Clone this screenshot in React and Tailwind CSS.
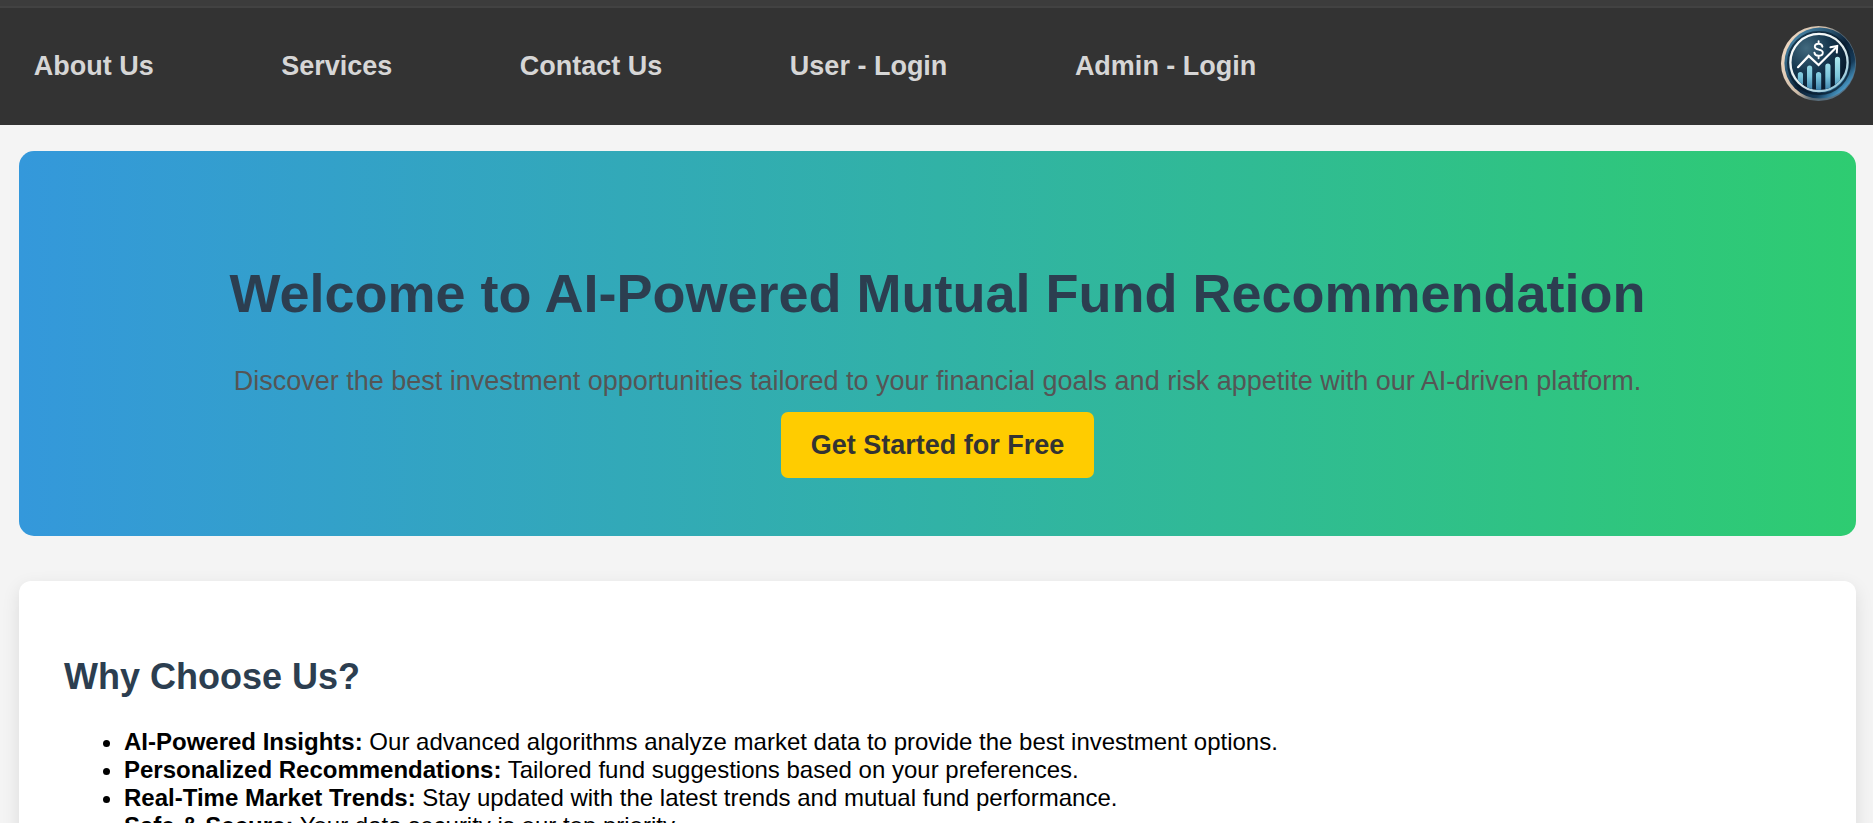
import React from 'react';

const links = ['About Us', 'Services', 'Contact Us', 'User - Login', 'Admin - Login'];

const reasons = [
  ['AI-Powered Insights:', 'Our advanced algorithms analyze market data to provide the best investment options.'],
  ['Personalized Recommendations:', 'Tailored fund suggestions based on your preferences.'],
  ['Real-Time Market Trends:', 'Stay updated with the latest trends and mutual fund performance.'],
  ['Safe & Secure:', 'Your data security is our top priority.'],
];

function Logo() {
  return (
    <svg viewBox="0 0 75 75" className="h-[75px] w-[75px] shrink-0" aria-hidden="true">
      <defs>
        <linearGradient id="rim" x1="0.05" y1="0.3" x2="0.95" y2="0.7">
          <stop offset="0" stopColor="#ecd6c0" />
          <stop offset="0.4" stopColor="#cdbba8" />
          <stop offset="0.6" stopColor="#5b6a74" />
          <stop offset="1" stopColor="#54758c" />
        </linearGradient>
        <linearGradient id="band" x1="0.15" y1="0.1" x2="0.88" y2="0.85">
          <stop offset="0" stopColor="#4682a4" />
          <stop offset="0.3" stopColor="#27526f" />
          <stop offset="0.55" stopColor="#0b2036" />
          <stop offset="0.8" stopColor="#163c5a" />
          <stop offset="1" stopColor="#4ea3d2" />
        </linearGradient>
        <radialGradient id="face" cx="0.28" cy="0.25" r="0.8">
          <stop offset="0" stopColor="#41697e" />
          <stop offset="0.5" stopColor="#173850" />
          <stop offset="1" stopColor="#07182b" />
        </radialGradient>
        <linearGradient id="ring" x1="0" y1="0" x2="0.8" y2="1">
          <stop offset="0" stopColor="#ffffff" />
          <stop offset="0.6" stopColor="#e4edee" />
          <stop offset="1" stopColor="#8cc3d8" />
        </linearGradient>
        <linearGradient id="bars" gradientUnits="userSpaceOnUse" x1="0" y1="31" x2="0" y2="66">
          <stop offset="0" stopColor="#aee8ee" />
          <stop offset="0.55" stopColor="#7cc6dc" />
          <stop offset="1" stopColor="#3478a6" />
        </linearGradient>
        <clipPath id="inside">
          <circle cx="38" cy="36.5" r="27.6" />
        </clipPath>
      </defs>
      <circle cx="37.5" cy="37.5" r="37.5" fill="url(#rim)" />
      <circle cx="38.9" cy="37.1" r="35.5" fill="url(#band)" />
      <circle cx="38" cy="37" r="31" fill="none" stroke="#07192b" strokeWidth="2" opacity="0.7" />
      <circle cx="38" cy="36.5" r="28.6" fill="url(#face)" stroke="url(#ring)" strokeWidth="2.3" />
      <g clipPath="url(#inside)" stroke="url(#bars)" strokeWidth="5.2" strokeLinecap="round">
        <path d="M19.4 70V48.5M28.6 70V42.2M37.6 70.1V48.5M46.9 70V40.2M56.5 70V33.4" />
      </g>
      <path d="M17 41.2 27.7 29.9 37.6 39 54.8 21.8" fill="none" stroke="#fff" strokeWidth="2.2" strokeLinecap="round" strokeLinejoin="miter" />
      <path d="M49.4 21.2 56.2 19.9 55.8 26.6" fill="none" stroke="#fff" strokeWidth="2" strokeLinecap="round" />
      <path d="M41.4 20.7C41 18.6 39.6 17.8 37.6 17.8 35.2 17.8 33.8 19 33.8 20.8 33.8 25 41.8 22.2 41.8 26.7 41.8 28.7 40 29.8 37.6 29.8 35.2 29.8 33.7 28.7 33.4 26.7M37.6 15.2V17.8M37.6 29.8V32.2" fill="none" stroke="#fff" strokeWidth="1.9" strokeLinecap="round" />
    </svg>
  );
}

export default function App() {
  return (
    <div className="h-[823px] overflow-hidden bg-[#f4f4f4] font-['Liberation_Sans',Arial,sans-serif] text-black">
      <header className="flex h-[125px] flex-col bg-[#333333]">
        <div className="h-[8px] shrink-0 border-b-2 border-[#424242] bg-[#3c3c3c]" />
        <div className="flex items-start justify-between pt-[18px] pr-[17px] pl-[33.75px]">
          <nav className="flex gap-[127.5px] pt-[25px] text-[27px] leading-[31px] font-bold text-[#d6d6d6]">
            {links.map((label) => (
              <a key={label} href="#" className="whitespace-nowrap">{label}</a>
            ))}
          </nav>
          <Logo />
        </div>
      </header>

      <main className="pt-[26px] pr-[17px] pl-[19px]">
        <section className="flex h-[385px] flex-col items-center rounded-[15px] bg-[linear-gradient(to_right,#3498db,#2ecc71)] pt-[111px] text-center">
          <h1 className="text-[54px] leading-[62px] font-bold whitespace-nowrap text-[#2c3e50]">
            Welcome to AI-Powered Mutual Fund Recommendation
          </h1>
          <p className="mt-[42px] text-[27px] leading-[31px] whitespace-nowrap text-[#555555]">
            Discover the best investment opportunities tailored to your financial goals and risk appetite with our AI-driven platform.
          </p>
          <button className="mt-[15px] h-[66px] w-[313px] rounded-[7px] bg-[#ffcc00] text-[27px] leading-[31px] font-bold text-[#333333]">
            Get Started for Free
          </button>
        </section>

        <section className="mt-[45px] h-[400px] rounded-[12px] bg-white px-[45px] pt-[75px] shadow-[0_6px_18px_rgba(0,0,0,0.1)]">
          <h2 className="text-[36px] leading-[41px] font-bold text-[#2c3e50]">Why Choose Us?</h2>
          <ul className="mt-[31px] list-disc pl-[60px] text-[24px] leading-[28px]">
            {reasons.map(([title, text]) => (
              <li key={title}>
                <strong className="font-bold">{title}</strong> {text}
              </li>
            ))}
          </ul>
        </section>
      </main>
    </div>
  );
}
